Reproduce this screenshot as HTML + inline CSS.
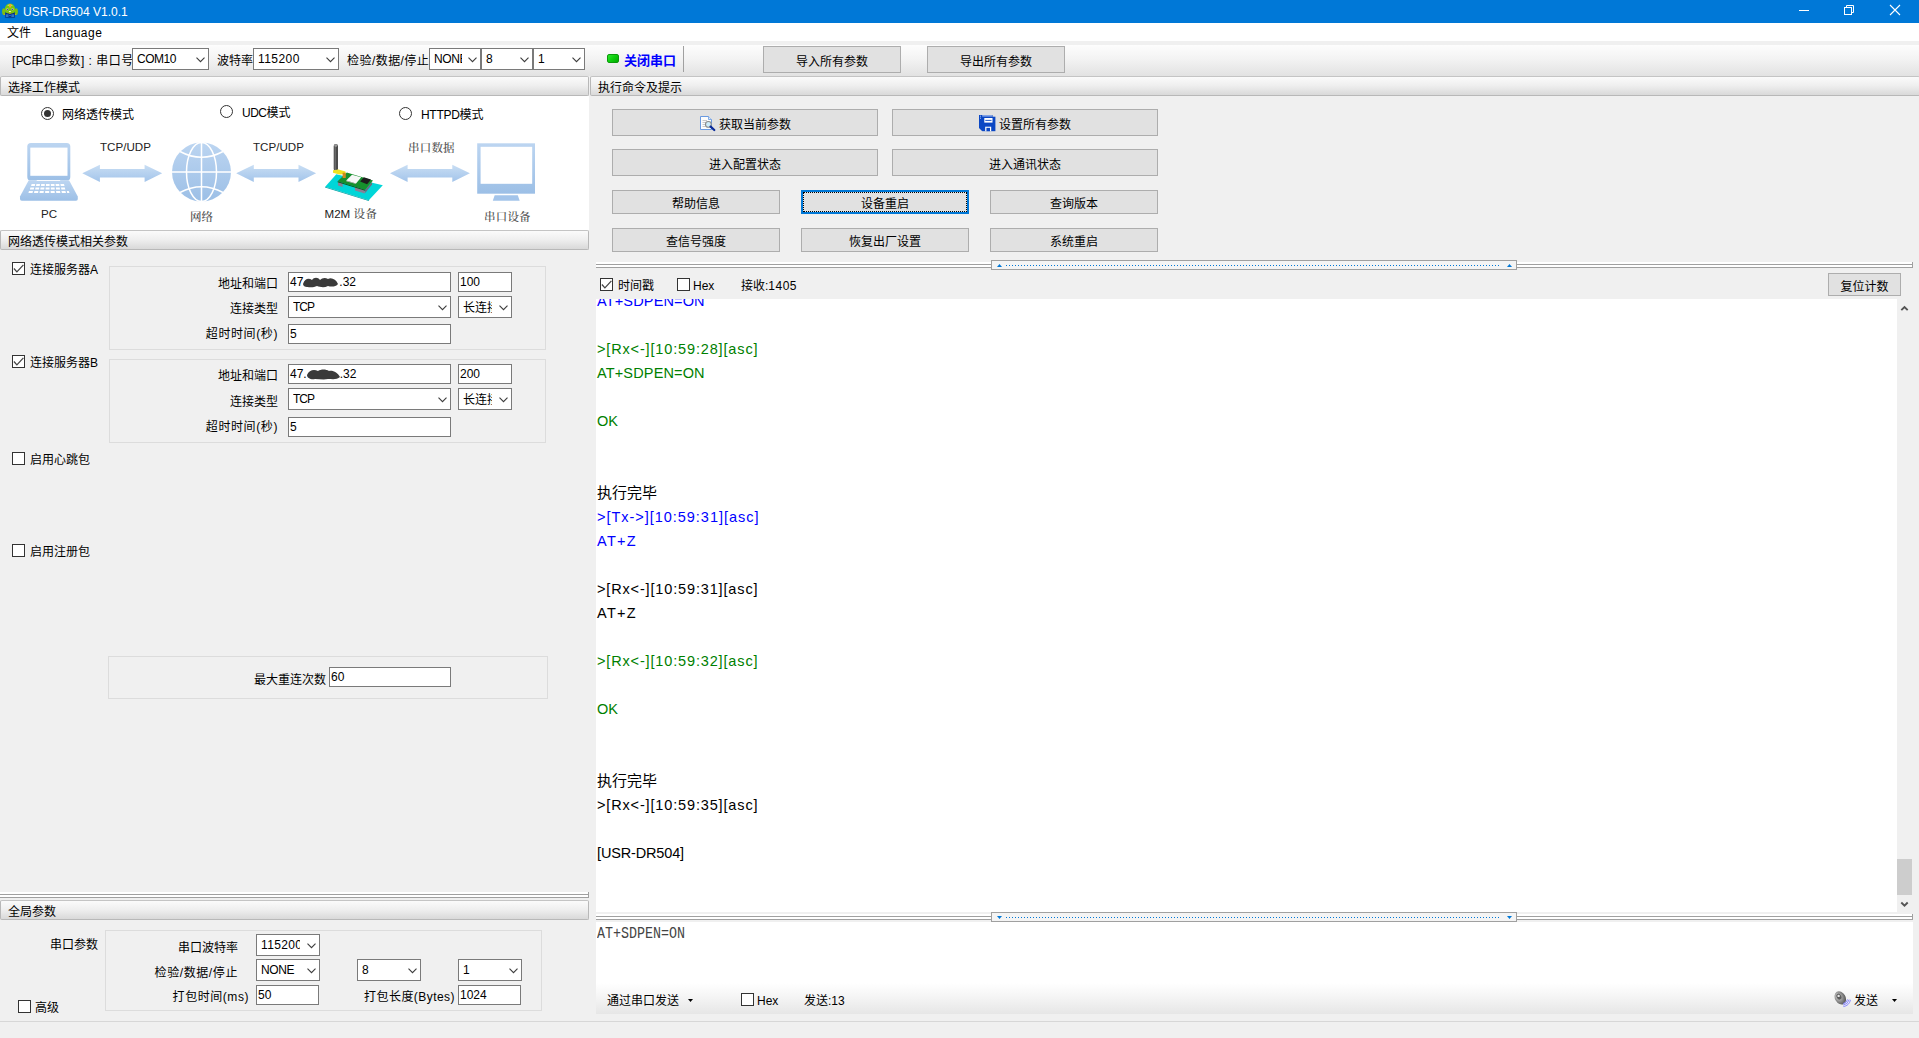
<!DOCTYPE html>
<html lang="zh-CN">
<head>
<meta charset="utf-8">
<title>USR-DR504 V1.0.1</title>
<style>
*{box-sizing:border-box;margin:0;padding:0}
html,body{width:1919px;height:1038px;overflow:hidden;background:#f0f0f0}
body{position:relative;font-family:"Liberation Sans","Noto Sans CJK SC",sans-serif;font-size:12px;color:#000;line-height:14px}
.a{position:absolute;white-space:nowrap}
.titlebar{left:0;top:0;width:1919px;height:23px;background:#0078d7}
.title{left:23px;top:5px;color:#fff;font-size:12px;line-height:15px}
.menubar{left:0;top:23px;width:1919px;height:18px;background:#fff}
.toolbar{left:0;top:45px;width:1919px;height:31px;background:linear-gradient(#fdfdfd 0%,#f3f3f3 45%,#e2e2e2 100%)}
.hdr{height:20px;border:1px solid #b8b8b8;border-top-color:#c4c4c4;border-radius:2px;background:linear-gradient(#fbfbfb,#eee 50%,#d9d9d9);padding:4px 0 0 7px;line-height:14px}
.white{background:#fff}
.cb{width:13px;height:13px;border:1px solid #333;background:#fff}
.rb{width:13px;height:13px;border:1px solid #333;border-radius:50%;background:#fff}
.inp{height:19px;border:1px solid #7a7a7a;background:#fff;padding:2px 0 0 1px;line-height:15px;overflow:hidden}
.sel{height:21px;border:1px solid #7a7a7a;background:#fff;padding:3px 0 0 4px;line-height:15px;overflow:hidden}
.sel .st{display:inline-block;overflow:hidden;height:15px}
.sel svg{position:absolute;right:3px;top:8px}
.btn{border:1px solid #adadad;background:#e1e1e1;text-align:center}
.btn.focus{border:2px solid #0078d7;outline:1px dotted #000;outline-offset:-3px}
.grp{border:1px solid #dcdcdc}
.log{left:0;font-size:14.5px;line-height:24px;height:24px}
.log.cj{font-size:15px}
.g{color:#008000}.b{color:#0000ff}
</style>
</head>
<body>
<div class="a titlebar"></div>
<svg class="a" style="left:2px;top:3px" width="16" height="16" viewBox="2 3 16 16"><ellipse cx="10" cy="17.3" rx="5.3" ry="0.9" fill="#003c8a" opacity=".55"/><path d="M5.3 12.2 H14.8 V17.3 H5.3Z" fill="#06257e"/><path d="M5.8 14.2 H8.6 V17 H5.8Z M11.3 14.2 H14.2 V17 H11.3Z" fill="#2f76c6"/><rect x="9.2" y="14.8" width="1.6" height="1.4" fill="#1b7de0"/><ellipse cx="3.7" cy="11.6" rx="1.6" ry="3.4" fill="#7cc012"/><ellipse cx="16.3" cy="11.6" rx="1.6" ry="3.4" fill="#7cc012"/><circle cx="4.3" cy="14.4" r=".6" fill="#d8b414"/><circle cx="15.6" cy="14.4" r=".6" fill="#d8b414"/><path d="M10 3.5 C14 3.6 15.6 7.5 15.2 10.5 C14.9 12.8 12.6 13.6 10 13.6 C7.4 13.6 5.1 12.8 4.8 10.5 C4.4 7.5 6 3.6 10 3.5Z" fill="#79c410"/><path d="M7 5.2 Q10 3.8 13 5.2 Q10 6.4 7 5.2Z" fill="#d7f0a8" opacity=".8"/><rect x="9.1" y="4" width="2" height="3.6" rx=".6" fill="#f5a623"/><circle cx="7.4" cy="9.3" r="1.15" fill="#c4e49a"/><circle cx="12.5" cy="9.3" r="1.15" fill="#c4e49a"/><circle cx="7.5" cy="9.4" r=".75" fill="#5a35b5"/><circle cx="12.4" cy="9.4" r=".75" fill="#5a35b5"/><ellipse cx="9.9" cy="11.4" rx="1.1" ry=".5" fill="#fbeefc"/><path d="M9.2 12.6 H10.7 L10.4 13.9 H9.5Z" fill="#e8a81c"/></svg>
<div class="a title">USR-DR504 V1.0.1</div>
<svg class="a" style="left:1780px;top:0" width="139" height="23" viewBox="1780 0 139 23" fill="none" stroke="#fff" stroke-width="1"><path d="M1799 10.5 H1809"/><rect x="1844.5" y="7.5" width="7" height="7"/><path d="M1846.5 7.5 V5.5 H1853.5 V12.5 H1851.5"/><path d="M1890 5 L1900 15 M1900 5 L1890 15" stroke-width="1.1"/></svg>
<div class="a menubar"></div>
<div class="a" style="left:7px;top:26px;">文件</div>
<div class="a" style="left:45px;top:26px;letter-spacing:.5px">Language</div>
<div class="a toolbar"></div>
<div class="a" style="left:12px;top:54px;letter-spacing:.5px">[<span style="letter-spacing:-.8px">PC</span>串口参数] : 串口号</div>
<div class="a sel" style="left:132px;top:48px;width:77px;height:22px;padding-top:3px"><span class="st" style="width:55px"><span style="letter-spacing:-.5px">COM10</span></span><svg width="9" height="6" viewBox="0 0 9 6"><path d="M0.5 0.7 L4.5 4.7 L8.5 0.7" fill="none" stroke="#3c3c3c" stroke-width="1.1"/></svg></div>
<div class="a" style="left:217px;top:54px;">波特率</div>
<div class="a sel" style="left:253px;top:48px;width:86px;height:22px;padding-top:3px"><span class="st" style="width:64px"><span style="letter-spacing:.45px">115200</span></span><svg width="9" height="6" viewBox="0 0 9 6"><path d="M0.5 0.7 L4.5 4.7 L8.5 0.7" fill="none" stroke="#3c3c3c" stroke-width="1.1"/></svg></div>
<div class="a" style="left:347px;top:54px;letter-spacing:.45px">检验/数据/停止</div>
<div class="a sel" style="left:429px;top:48px;width:52px;height:22px;padding-top:3px"><span class="st" style="width:28px"><span style="letter-spacing:-.4px">NONE</span></span><svg width="9" height="6" viewBox="0 0 9 6"><path d="M0.5 0.7 L4.5 4.7 L8.5 0.7" fill="none" stroke="#3c3c3c" stroke-width="1.1"/></svg></div>
<div class="a sel" style="left:481px;top:48px;width:52px;height:22px;padding-top:3px"><span class="st" style="width:30px">8</span><svg width="9" height="6" viewBox="0 0 9 6"><path d="M0.5 0.7 L4.5 4.7 L8.5 0.7" fill="none" stroke="#3c3c3c" stroke-width="1.1"/></svg></div>
<div class="a sel" style="left:533px;top:48px;width:52px;height:22px;padding-top:3px"><span class="st" style="width:30px">1</span><svg width="9" height="6" viewBox="0 0 9 6"><path d="M0.5 0.7 L4.5 4.7 L8.5 0.7" fill="none" stroke="#3c3c3c" stroke-width="1.1"/></svg></div>
<div class="a" style="left:607px;top:54px;width:12px;height:9px;border-radius:2px;background:linear-gradient(135deg,#2ee62e 0%,#0fd00f 45%,#00aa00 100%);border:1px solid #0a9a0a"></div>
<div class="a" style="left:624px;top:53px;font-size:13px;font-weight:bold;color:#0000ff;line-height:16px">关闭串口</div>
<div class="a" style="left:683px;top:46px;width:1px;height:26px;background:#a0a0a0"></div>
<div class="a btn " style="left:763px;top:46px;width:138px;height:27px;padding-top:5px;padding-top:8px">导入所有参数</div>
<div class="a btn " style="left:927px;top:46px;width:138px;height:27px;padding-top:5px;padding-top:8px">导出所有参数</div>
<div class="a hdr" style="left:0px;top:76px;width:589px">选择工作模式</div>
<div class="a white" style="left:0;top:96px;width:589px;height:134px"></div>
<div class="a rb" style="left:41px;top:107px"><div style="position:absolute;left:2px;top:2px;width:7px;height:7px;border-radius:50%;background:#333"></div></div>
<div class="a" style="left:62px;top:108px;">网络透传模式</div>
<div class="a rb" style="left:220px;top:105px"></div>
<div class="a" style="left:242px;top:106px;"><span style="letter-spacing:-.5px">UDC</span>模式</div>
<div class="a rb" style="left:399px;top:107px"></div>
<div class="a" style="left:421px;top:108px;"><span style="letter-spacing:-.3px">HTTPD</span>模式</div>
<svg class="a" style="left:0;top:96px" width="589" height="134" viewBox="0 96 589 134" font-family="'Liberation Sans','Noto Sans CJK SC',sans-serif" font-size="11.6">
<defs>
<linearGradient id="lb" x1="0" y1="0" x2="0" y2="1"><stop offset="0" stop-color="#bcd5f1"/><stop offset="1" stop-color="#9cbfe6"/></linearGradient>
<linearGradient id="ar" x1="0" y1="0" x2="0" y2="1"><stop offset="0" stop-color="#c9def4"/><stop offset="1" stop-color="#a3c4ea"/></linearGradient>
</defs>
<!-- laptop -->
<rect x="27.3" y="143" width="43" height="37.5" rx="3.6" fill="url(#lb)"/>
<rect x="30.3" y="147.6" width="37.2" height="28.2" fill="#fff"/>
<path d="M28.6 180.6 L69.2 180.6 L77.8 196.5 L77.8 199 Q77.8 200.8 76 200.8 L21.8 200.8 Q20 200.8 20 199 L20 196.5Z" fill="url(#lb)"/>
<rect x="36.7" y="180" width="23.5" height="0.9" fill="#fff"/>
<g fill="#fff">
<path d="M31.6 184 h3.6 l-.4 2 h-3.7z M36.4 184 h3.6 l-.3 2 h-3.7z M41.2 184 h3.6 l-.1 2 h-3.7z M46 184 h3.6 l0 2 h-3.7z M50.8 184 h3.6 l.2 2 h-3.7z M55.6 184 h3.6 l.3 2 h-3.7z M60.4 184 h3.6 l.5 2 h-3.7z"/>
<path d="M30.4 187.4 h3.8 l-.4 2.1 h-3.9z M35.5 187.4 h3.8 l-.3 2.1 h-3.9z M40.6 187.4 h3.8 l-.2 2.1 h-3.9z M45.7 187.4 h3.8 l0 2.1 h-3.9z M50.8 187.4 h3.8 l.2 2.1 h-3.9z M55.9 187.4 h3.8 l.3 2.1 h-3.9z M61 187.4 h3.8 l.5 2.1 h-3.9z"/>
<path d="M29 190.9 h4 l-.5 2.2 h-4.1z M34.4 190.9 h4 l-.3 2.2 h-4.1z M39.8 190.9 h4 l-.2 2.2 h-4.1z M45.2 190.9 h4 l0 2.2 h-4.1z M50.6 190.9 h4 l.2 2.2 h-4.1z M56 190.9 h4 l.4 2.2 h-4.1z M61.4 190.9 h4 l.6 2.2 h-4.1z M66.8 190.9 h2 l.7 2.2 h-2.3z"/>
</g>
<text x="41" y="217.6" fill="#222">PC</text>
<!-- arrows -->
<path transform="translate(82.3 173.3)" d="M0 0 L17.6 -8.6 L17.6 -4.2 L62.3 -4.2 L62.3 -8.6 L79.9 0 L62.3 8.6 L62.3 4.2 L17.6 4.2 L17.6 8.6Z" fill="url(#ar)"/>
<path transform="translate(236.2 173.3)" d="M0 0 L17.6 -8.6 L17.6 -4.2 L62.3 -4.2 L62.3 -8.6 L79.9 0 L62.3 8.6 L62.3 4.2 L17.6 4.2 L17.6 8.6Z" fill="url(#ar)"/>
<path transform="translate(390 173.3)" d="M0 0 L17.6 -8.6 L17.6 -4.2 L62.3 -4.2 L62.3 -8.6 L79.9 0 L62.3 8.6 L62.3 4.2 L17.6 4.2 L17.6 8.6Z" fill="url(#ar)"/>
<text x="100" y="151.4" fill="#222">TCP/UDP</text>
<text x="253" y="151.4" fill="#222">TCP/UDP</text>
<text x="408" y="152" fill="#4a4a4a" font-weight="500" font-family="'Liberation Serif','Noto Serif CJK SC',serif" font-size="11.5" letter-spacing="0.2">串口数据</text>
<!-- globe -->
<circle cx="201.5" cy="172" r="29.5" fill="url(#lb)"/>
<g fill="none" stroke="#fff" stroke-width="1.5">
<path d="M201.5 142 V202 M171.5 172 H231.5"/>
<ellipse cx="201.5" cy="172" rx="15" ry="29.5"/>
<path d="M180 151.5 Q201.5 163 223 151.5 M180 192.5 Q201.5 181 223 192.5"/>
</g>
<text x="190" y="221" fill="#4a4a4a" font-weight="500" font-family="'Liberation Serif','Noto Serif CJK SC',serif" font-size="11.5">网络</text>
<!-- M2M device -->
<path d="M325.2 186.8 L336.3 174.3 L382.8 185.2 L368.8 200.2Z" fill="#00d6d8"/>
<path d="M325.2 186.8 L368.8 200.2 L369.4 199.4 L368.8 201 L325 187.6Z" fill="#00a3a6"/>
<path d="M338 185.6 L342.6 186.9 L342.6 183 L338 181.8Z" fill="#8a7f95"/>
<path d="M355 190.6 L364.8 193.4 L364.8 189.6 L355 187Z" fill="#8a7f95"/>
<path d="M365.2 193 L372 184.4 L372 182 L365.2 189.7Z" fill="#6d6a80"/>
<path d="M337.6 181.2 L346.8 172.4 L373 180.6 L365.2 189.7Z" fill="#16902c"/>
<path d="M337.6 181.2 L365.2 189.7 L365.2 190.7 L337.6 182.2Z" fill="#0c5a1a"/>
<path d="M346.2 180.6 L352 174.7 L361.2 177.3 L356 183.5Z" fill="#f7f7f7"/>
<path d="M346.2 180.6 L356 183.5 L356 184.1 L346.2 181.2Z" fill="#c9b8c0"/>
<path d="M360.2 181.5 L363.8 177.3 L371 179.6 L367.1 184.2Z" fill="#1c1c1c"/>
<rect x="333.7" y="144" width="4.3" height="27" rx="2.1" fill="#4b4b4b"/>
<rect x="334.6" y="144.6" width="1.3" height="26" rx=".6" fill="#6f6f6f"/>
<ellipse cx="335.8" cy="145.6" rx="1.5" ry="1.3" fill="#9a9a9a"/>
<path d="M333 170.2 L338.5 169.6 L345.5 171.6 L345.5 174 L339.5 174.6 L333 172.8Z" fill="#efe320"/>
<rect x="342.6" y="172.7" width="3.2" height="5.3" fill="#d08a1e"/>
<text x="324.5" y="218" fill="#222">M2M <tspan fill="#4a4a4a" font-weight="500" font-family="'Liberation Serif','Noto Serif CJK SC',serif" font-size="11.5" letter-spacing="0.6">设备</tspan></text>
<!-- monitor -->
<rect x="477.2" y="143.3" width="57.8" height="50.4" fill="url(#lb)"/>
<rect x="480.6" y="146.8" width="51.6" height="37" fill="#fff"/>
<path d="M494.7 195.2 L517.8 195.2 L519.7 200.8 L492.8 200.8Z" fill="#a3c4ea"/>
<text x="484" y="221" fill="#4a4a4a" font-weight="500" font-family="'Liberation Serif','Noto Serif CJK SC',serif" font-size="11.5" letter-spacing="0.2">串口设备</text>
</svg>
<div class="a hdr" style="left:0px;top:230px;width:589px">网络透传模式相关参数</div>
<div class="a cb" style="left:12px;top:262px"><svg width="11" height="11" viewBox="0 0 11 11" style="position:absolute;left:0;top:0"><path d="M0.9 5.5 L3.9 8.9 L10.4 1.8" fill="none" stroke="#444" stroke-width="1.25"/></svg></div>
<div class="a" style="left:30px;top:263px;">连接服务器A</div>
<div class="a grp" style="left:109px;top:266px;width:437px;height:84px"></div>
<div class="a" style="right:1641px;top:277px;">地址和端口</div>
<div class="a inp" style="left:288px;top:272px;width:163px;height:20px">47<svg width="36" height="12" viewBox="0 0 36 12" style="vertical-align:-2px"><path d="M0 8 C2 2,6 2,9 4 C11 1,15 1,17 4 C19 2,22 1,25 3 C28 1,33 3,35 8 C33 11,28 11,25 10 C21 12,17 11,14 10 C10 12,6 11,4 11 C2 11,0 10,0 8Z" fill="#3a3a3a"/></svg>.32</div>
<div class="a inp" style="left:458px;top:272px;width:54px;height:20px">100</div>
<div class="a" style="right:1641px;top:302px;">连接类型</div>
<div class="a sel" style="left:288px;top:296px;width:163px;height:22px"><span class="st" style="width:141px"><span style="letter-spacing:-1px">TCP</span></span><svg width="9" height="6" viewBox="0 0 9 6"><path d="M0.5 0.7 L4.5 4.7 L8.5 0.7" fill="none" stroke="#3c3c3c" stroke-width="1.1"/></svg></div>
<div class="a sel" style="left:458px;top:296px;width:54px;height:22px;padding-top:4px"><span class="st" style="width:29px">长连接</span><svg width="9" height="6" viewBox="0 0 9 6"><path d="M0.5 0.7 L4.5 4.7 L8.5 0.7" fill="none" stroke="#3c3c3c" stroke-width="1.1"/></svg></div>
<div class="a" style="right:1641px;top:327px;letter-spacing:.6px">超时时间(秒)</div>
<div class="a inp" style="left:288px;top:324px;width:163px;height:20px">5</div>
<div class="a cb" style="left:12px;top:355px"><svg width="11" height="11" viewBox="0 0 11 11" style="position:absolute;left:0;top:0"><path d="M0.9 5.5 L3.9 8.9 L10.4 1.8" fill="none" stroke="#444" stroke-width="1.25"/></svg></div>
<div class="a" style="left:30px;top:356px;">连接服务器B</div>
<div class="a grp" style="left:109px;top:359px;width:437px;height:84px"></div>
<div class="a" style="right:1641px;top:369px;">地址和端口</div>
<div class="a inp" style="left:288px;top:364px;width:163px;height:20px">47.<svg width="33" height="12" viewBox="0 0 33 12" style="vertical-align:-2px"><path d="M0 7 C2 2,7 1,11 3 C14 1,19 1,22 3 C26 2,31 5,33 9 C30 12,25 11,21 11 C17 12,12 11,8 11 C4 12,0 10,0 7Z" fill="#3a3a3a"/></svg>.32</div>
<div class="a inp" style="left:458px;top:364px;width:54px;height:20px">200</div>
<div class="a" style="right:1641px;top:395px;">连接类型</div>
<div class="a sel" style="left:288px;top:388px;width:163px;height:22px"><span class="st" style="width:141px"><span style="letter-spacing:-1px">TCP</span></span><svg width="9" height="6" viewBox="0 0 9 6"><path d="M0.5 0.7 L4.5 4.7 L8.5 0.7" fill="none" stroke="#3c3c3c" stroke-width="1.1"/></svg></div>
<div class="a sel" style="left:458px;top:388px;width:54px;height:22px;padding-top:4px"><span class="st" style="width:29px">长连接</span><svg width="9" height="6" viewBox="0 0 9 6"><path d="M0.5 0.7 L4.5 4.7 L8.5 0.7" fill="none" stroke="#3c3c3c" stroke-width="1.1"/></svg></div>
<div class="a" style="right:1641px;top:420px;letter-spacing:.6px">超时时间(秒)</div>
<div class="a inp" style="left:288px;top:417px;width:163px;height:20px">5</div>
<div class="a cb" style="left:12px;top:452px"></div>
<div class="a" style="left:30px;top:453px;">启用心跳包</div>
<div class="a cb" style="left:12px;top:544px"></div>
<div class="a" style="left:30px;top:545px;">启用注册包</div>
<div class="a grp" style="left:108px;top:656px;width:440px;height:43px"></div>
<div class="a" style="right:1593px;top:673px;">最大重连次数</div>
<div class="a inp" style="left:329px;top:667px;width:122px;height:20px">60</div>
<div class="a" style="left:0;top:892px;width:589px;height:2px;background:#fff;border-right:1px solid #a0a0a0"></div>
<div class="a" style="left:0;top:894px;width:589px;height:4px;border:1px solid #a0a0a0;border-left:none;background:#fff"></div>
<div class="a hdr" style="left:0px;top:900px;width:589px">全局参数</div>
<div class="a" style="left:50px;top:938px;">串口参数</div>
<div class="a grp" style="left:105px;top:930px;width:437px;height:81px"></div>
<div class="a" style="right:1681px;top:941px;">串口波特率</div>
<div class="a sel" style="left:256px;top:934px;width:64px;height:22px"><span class="st" style="width:39px"><span style="letter-spacing:.35px">115200</span></span><svg width="9" height="6" viewBox="0 0 9 6"><path d="M0.5 0.7 L4.5 4.7 L8.5 0.7" fill="none" stroke="#3c3c3c" stroke-width="1.1"/></svg></div>
<div class="a" style="right:1681px;top:966px;letter-spacing:.6px">检验/数据/停止</div>
<div class="a sel" style="left:256px;top:959px;width:64px;height:22px"><span class="st" style="width:42px"><span style="letter-spacing:-.4px">NONE</span></span><svg width="9" height="6" viewBox="0 0 9 6"><path d="M0.5 0.7 L4.5 4.7 L8.5 0.7" fill="none" stroke="#3c3c3c" stroke-width="1.1"/></svg></div>
<div class="a sel" style="left:357px;top:959px;width:64px;height:22px"><span class="st" style="width:42px">8</span><svg width="9" height="6" viewBox="0 0 9 6"><path d="M0.5 0.7 L4.5 4.7 L8.5 0.7" fill="none" stroke="#3c3c3c" stroke-width="1.1"/></svg></div>
<div class="a sel" style="left:458px;top:959px;width:64px;height:22px"><span class="st" style="width:42px">1</span><svg width="9" height="6" viewBox="0 0 9 6"><path d="M0.5 0.7 L4.5 4.7 L8.5 0.7" fill="none" stroke="#3c3c3c" stroke-width="1.1"/></svg></div>
<div class="a" style="right:1670px;top:990px;letter-spacing:.55px">打包时间(ms)</div>
<div class="a inp" style="left:256px;top:985px;width:63px;height:20px">50</div>
<div class="a" style="right:1464px;top:990px;letter-spacing:.45px">打包长度(Bytes)</div>
<div class="a inp" style="left:458px;top:985px;width:63px;height:20px">1024</div>
<div class="a cb" style="left:18px;top:1000px"></div>
<div class="a" style="left:35px;top:1001px;">高级</div>
<div class="a" style="left:0;top:1021px;width:1919px;height:1px;background:#d7d7d7"></div>
<div class="a hdr" style="left:590px;top:76px;width:1330px">执行命令及提示</div>
<div class="a btn " style="left:612px;top:109px;width:266px;height:27px;padding-top:5px;padding-top:8px"><svg width="16" height="16" viewBox="0 0 16 16" style="position:absolute;left:87px;top:6px"><path d="M.5 .5 H8.5 L11.5 3.5 V13.5 H.5Z" fill="#fdfdfd" stroke="#6a9ae0" stroke-width="1"/><path d="M8.5 .5 V3.5 H11.5" fill="#dce8f8" stroke="#6a9ae0" stroke-width=".8"/><path d="M2.5 4.5 H7 M2.5 6.5 H6 M2.5 8.5 H5 M2.5 10.5 H5.5" stroke="#c9c9c9" stroke-width="1"/><circle cx="8.4" cy="8.4" r="2.9" fill="#cfeefa" stroke="#8a8a8a" stroke-width="1.1"/><path d="M10.6 10.6 L14.3 14" stroke="#0a2a9a" stroke-width="2.2" stroke-linecap="round"/></svg><span style="padding-left:20px">获取当前参数</span></div>
<div class="a btn " style="left:892px;top:109px;width:266px;height:27px;padding-top:5px;padding-top:8px"><svg width="17" height="17" viewBox="0 0 17 17" style="position:absolute;left:86px;top:5px"><path d="M0 0 H13.5 V13 L3 16 L0 13Z" fill="#0b47c4"/><path d="M1 1.2 h1 M1 3.2 h1" stroke="#cfe0ff" stroke-width=".8"/><rect x="3.2" y="1.7" width="13.2" height="14.5" fill="#0b47c4"/><path d="M3.2 .9 H13" stroke="#e8f0ff" stroke-width=".9"/><rect x="5.3" y="3" width="8.2" height="4.6" fill="#fff"/><rect x="6.3" y="4.9" width="6.2" height=".9" fill="#0b47c4"/><rect x="6.2" y="11.7" width="6" height="4.5" fill="#fff"/><rect x="7.4" y="12.8" width="3.6" height="3.4" fill="#0b47c4"/></svg><span style="padding-left:20px">设置所有参数</span></div>
<div class="a btn " style="left:612px;top:149px;width:266px;height:27px;padding-top:5px;padding-top:8px">进入配置状态</div>
<div class="a btn " style="left:892px;top:149px;width:266px;height:27px;padding-top:5px;padding-top:8px">进入通讯状态</div>
<div class="a btn " style="left:612px;top:190px;width:168px;height:24px;padding-top:4px;padding-top:6px">帮助信息</div>
<div class="a btn focus" style="left:801px;top:190px;width:168px;height:24px;padding-top:4px;padding-top:5px">设备重启</div>
<div class="a btn " style="left:990px;top:190px;width:168px;height:24px;padding-top:4px;padding-top:6px">查询版本</div>
<div class="a btn " style="left:612px;top:228px;width:168px;height:24px;padding-top:4px;padding-top:6px">查信号强度</div>
<div class="a btn " style="left:801px;top:228px;width:168px;height:24px;padding-top:4px;padding-top:6px">恢复出厂设置</div>
<div class="a btn " style="left:990px;top:228px;width:168px;height:24px;padding-top:4px;padding-top:6px">系统重启</div>
<div class="a" style="left:596px;top:262px;width:1317px;height:2px;background:#fff;border-right:1px solid #a0a0a0"></div>
<div class="a" style="left:596px;top:264px;width:1317px;height:4px;border:1px solid #a0a0a0;border-left:none;background:#fff"></div>
<div class="a" style="left:991px;top:260px;width:526px;height:10px;border:1px solid #a0a0a0;background:#f4f4f4"></div>
<div class="a" style="left:1006px;top:265px;width:493px;height:1px;background:repeating-linear-gradient(90deg,#0078d7 0,#0078d7 1px,transparent 1px,transparent 3px)"></div>
<svg class="a" style="left:997px;top:264px" width="5" height="3" viewBox="0 0 5 3"><path d="M0 3 L2.5 0 L5 3Z" fill="#0078d7"/></svg>
<svg class="a" style="left:1507px;top:264px" width="5" height="3" viewBox="0 0 5 3"><path d="M0 3 L2.5 0 L5 3Z" fill="#0078d7"/></svg>
<div class="a cb" style="left:600px;top:278px"><svg width="11" height="11" viewBox="0 0 11 11" style="position:absolute;left:0;top:0"><path d="M0.9 5.5 L3.9 8.9 L10.4 1.8" fill="none" stroke="#444" stroke-width="1.25"/></svg></div>
<div class="a" style="left:618px;top:279px;">时间戳</div>
<div class="a cb" style="left:677px;top:278px"></div>
<div class="a" style="left:693px;top:279px;">Hex</div>
<div class="a" style="left:741px;top:279px;">接收:<span style="letter-spacing:.5px">1405</span></div>
<div class="a btn " style="left:1828px;top:273px;width:73px;height:23px;padding-top:3px;padding-top:6px">复位计数</div>
<div class="a white" style="left:596px;top:299px;width:1301px;height:613px;overflow:hidden">
<div class="a log b" style="top:-10px;left:1px;letter-spacing:0.15px">AT+SDPEN=ON</div>
<div class="a log g" style="top:38px;left:1px;letter-spacing:0.85px">&gt;[Rx&lt;-][10:59:28][asc]</div>
<div class="a log g" style="top:62px;left:1px;letter-spacing:0.15px">AT+SDPEN=ON</div>
<div class="a log g" style="top:110px;left:1px;letter-spacing:0px">OK</div>
<div class="a log cj " style="top:182px;left:1px">执行完毕</div>
<div class="a log b" style="top:206px;left:1px;letter-spacing:0.97px">&gt;[Tx-&gt;][10:59:31][asc]</div>
<div class="a log b" style="top:230px;left:1px;letter-spacing:1.3px">AT+Z</div>
<div class="a log " style="top:278px;left:1px;letter-spacing:0.85px">&gt;[Rx&lt;-][10:59:31][asc]</div>
<div class="a log " style="top:302px;left:1px;letter-spacing:1.3px">AT+Z</div>
<div class="a log g" style="top:350px;left:1px;letter-spacing:0.85px">&gt;[Rx&lt;-][10:59:32][asc]</div>
<div class="a log g" style="top:398px;left:1px;letter-spacing:0px">OK</div>
<div class="a log cj " style="top:470px;left:1px">执行完毕</div>
<div class="a log " style="top:494px;left:1px;letter-spacing:0.85px">&gt;[Rx&lt;-][10:59:35][asc]</div>
<div class="a log " style="top:542px;left:1px;letter-spacing:-0.15px">[USR-DR504]</div>
</div>
<div class="a" style="left:1897px;top:299px;width:15px;height:613px;background:#f0f0f0"></div>
<div class="a" style="left:1897px;top:859px;width:15px;height:36px;background:#cdcdcd"></div>
<svg class="a" style="left:1900px;top:305px" width="9" height="7" viewBox="0 0 9 7"><path d="M1.3 5.2 L4.5 2 L7.7 5.2" fill="none" stroke="#555" stroke-width="1.9"/></svg>
<svg class="a" style="left:1900px;top:901px" width="9" height="7" viewBox="0 0 9 7"><path d="M1.3 1.5 L4.5 4.7 L7.7 1.5" fill="none" stroke="#555" stroke-width="1.9"/></svg>
<div class="a white" style="left:596px;top:922px;width:1317px;height:63px"></div>
<div class="a" style="left:596px;top:914px;width:1317px;height:2px;background:#fff;border-right:1px solid #a0a0a0"></div>
<div class="a" style="left:596px;top:916px;width:1317px;height:4px;border:1px solid #a0a0a0;border-left:none;background:#fff"></div>
<div class="a" style="left:991px;top:912px;width:526px;height:10px;border:1px solid #a0a0a0;background:#f4f4f4"></div>
<div class="a" style="left:1006px;top:917px;width:493px;height:1px;background:repeating-linear-gradient(90deg,#0078d7 0,#0078d7 1px,transparent 1px,transparent 3px)"></div>
<svg class="a" style="left:997px;top:916px" width="5" height="3" viewBox="0 0 5 3"><path d="M0 0 L5 0 L2.5 3Z" fill="#0078d7"/></svg>
<svg class="a" style="left:1507px;top:916px" width="5" height="3" viewBox="0 0 5 3"><path d="M0 0 L5 0 L2.5 3Z" fill="#0078d7"/></svg>
<div class="a" style="left:597px;top:925px;font-family:'Liberation Mono',monospace;font-size:16px;line-height:18px;color:#444;transform:scaleX(.8333);transform-origin:0 0">AT+SDPEN=ON</div>
<div class="a" style="left:596px;top:983px;width:1317px;height:31px;background:linear-gradient(#fff 0%,#f6f6f6 40%,#e6e6e6 100%)"></div>
<div class="a" style="left:607px;top:994px;">通过串口发送</div>
<svg class="a" style="left:688px;top:999px" width="5" height="3" viewBox="0 0 5 3"><path d="M0 0 L5 0 L2.5 3Z" fill="#000"/></svg>
<div class="a cb" style="left:741px;top:993px"></div>
<div class="a" style="left:757px;top:994px;">Hex</div>
<div class="a" style="left:804px;top:994px;">发送:13</div>
<svg class="a" style="left:1833px;top:991px" width="18" height="17" viewBox="0 0 18 17"><defs><radialGradient id="sp" cx=".4" cy=".35" r=".7"><stop offset="0" stop-color="#f2f2f2"/><stop offset=".45" stop-color="#9a9a9a"/><stop offset="1" stop-color="#4e4e4e"/></radialGradient></defs><ellipse cx="7.3" cy="6.9" rx="5.3" ry="7" transform="rotate(-30 7.3 6.9)" fill="url(#sp)"/><ellipse cx="5.9" cy="5.6" rx="2.3" ry="3.1" transform="rotate(-30 5.9 5.6)" fill="#5c5c5c"/><circle cx="5.6" cy="4.9" r="1.2" fill="#e8e8e8"/><path d="M14.6 8.4 A5.7 5.7 0 0 1 10 12.6 M16.1 8.6 A7.2 7.2 0 0 1 10.2 14.1 M17.5 8.8 A8.7 8.7 0 0 1 10.4 15.6" fill="none" stroke="#7f7fff" stroke-width=".9"/></svg>
<div class="a" style="left:1854px;top:994px;">发送</div>
<svg class="a" style="left:1892px;top:999px" width="5" height="3" viewBox="0 0 5 3"><path d="M0 0 L5 0 L2.5 3Z" fill="#000"/></svg>
</body>
</html>
